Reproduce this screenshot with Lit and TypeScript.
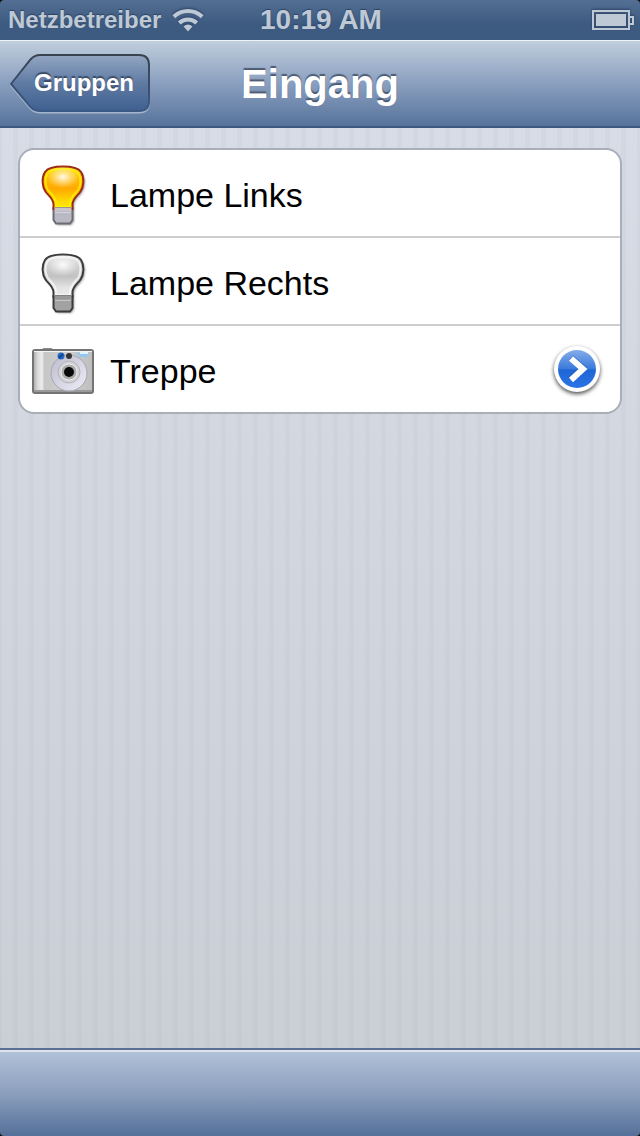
import { LitElement, html, css, svg } from "lit";
import { customElement, property } from "lit/decorators.js";

type IconName = "lamp-on" | "lamp-off" | "camera";

interface Device {
  name: string;
  icon: IconName;
  detail?: boolean;
}

const devices: Device[] = [
  { name: "Lampe Links", icon: "lamp-on" },
  { name: "Lampe Rechts", icon: "lamp-off" },
  { name: "Treppe", icon: "camera", detail: true },
];

@customElement("device-icon")
export class DeviceIcon extends LitElement {
  @property() name: IconName = "lamp-on";

  static styles = css`
    :host {
      display: block;
      width: 64px;
      height: 64px;
    }
    .icon {
      display: block;
      width: 100%;
      height: 100%;
    }
  `;

  private bulb(on: boolean) {
    const edge = on ? "#9c2b14" : "#3c3c3c";
    const glass =
      "M31 3.5C23 3.500 16 4.500 13 9C9.500 14.500 10 23.500 13.500 28.500C16.500 33 21 35 21.500 41L21.500 46H40.500L40.500 41C41 35 45.500 33 48.500 28.500C52 23.500 52.500 14.500 49 9C46 4.500 39 3.500 31 3.500Z";
    const base = "M21.500 45H40.500V57L38 60.500H24L21.500 57Z";
    return svg`
      <defs>
        <linearGradient id="glass" x1="0" y1="0" x2="0" y2="1">
          <stop offset="0" stop-color=${on ? "#ffdc18" : "#e6e6e6"} />
          <stop offset=".3" stop-color=${on ? "#ffbe10" : "#d0d0d0"} />
          <stop offset=".52" stop-color=${on ? "#ffa800" : "#c2c2c2"} />
          <stop offset=".78" stop-color=${on ? "#ffd400" : "#e4e4e4"} />
          <stop offset="1" stop-color=${on ? "#ffef00" : "#ededed"} />
        </linearGradient>
        <radialGradient id="shine">
          <stop offset="0" stop-color="#fff" stop-opacity=".9" />
          <stop offset=".5" stop-color="#fff" stop-opacity=".4" />
          <stop offset="1" stop-color="#fff" stop-opacity="0" />
        </radialGradient>
        <filter id="soft" x="-20%" y="-20%" width="140%" height="140%">
          <feGaussianBlur stdDeviation="1" />
        </filter>
      </defs>
      <g transform="translate(1.500 1.500)" opacity=".4" filter="url(#soft)">
        <path d=${glass} /><path d=${base} />
      </g>
      <path d=${base} fill=${on ? "#b9b9c6" : "#a2a2a2"} stroke=${on ? "#6c6c72" : "#3c3c3c"} stroke-width="2" />
      <path d=${glass} fill="url(#glass)" stroke=${edge} stroke-width="2" />
      <path d="M31 6C24 6 18 6.500 15.500 10.500C12.500 15.500 13 22.500 16 27C19 31 23.500 34 24 40V44H38V40C38.500 34 43 31 46 27C49 22.500 49.500 15.500 46.500 10.500C44 6.500 38 6 31 6Z"
        fill="none" stroke=${on ? "#fff000" : "#f8f8f8"} stroke-width="2" opacity=".8" />
      <ellipse cx="31" cy="14" rx="15" ry="11" fill="url(#shine)" />
      <path d="M22.500 44H39.500V48H22.500Z" fill=${on ? "#c8c4c8" : "#999"} />
      <path d="M22.500 44.500H39.500" stroke=${on ? "#9b958e" : "#818181"} stroke-width="1" />
      <path d="M23 49.500H39" stroke="#fff" stroke-width="1" opacity=".4" />
    `;
  }

  private camera() {
    return svg`
      <defs>
        <linearGradient id="body" x1="0" y1="0" x2="1" y2="0">
          <stop offset="0" stop-color="#a9a9a9" />
          <stop offset=".08" stop-color="#dadada" />
          <stop offset=".15" stop-color="#eeeeee" />
          <stop offset=".19" stop-color="#c6c6c6" />
          <stop offset=".55" stop-color="#cfcfcf" />
          <stop offset="1" stop-color="#bebebe" />
        </linearGradient>
        <linearGradient id="ring" x1="0" y1="0" x2="1" y2="1">
          <stop offset="0" stop-color="#bbbbcc" />
          <stop offset="1" stop-color="#eeeefa" />
        </linearGradient>
      </defs>
      <rect x="10" y="9" width="11" height="4" rx="2" fill="#8b8b8b" />
      <rect x="1" y="11" width="60" height="43" rx="2" fill="url(#body)" stroke="#747474" stroke-width="2" />
      <path d="M2 52H60" stroke="#999" stroke-width="2" />
      <path d="M2 12.500H60" stroke="#f3f3f3" />
      <circle cx="37" cy="34" r="18" fill="url(#ring)" stroke="#a7a7b4" />
      <path d="M44 14H57L55 18H48Z" fill="#94c6ef" />
      <path d="M48 14L56 14" stroke="#dff3ff" stroke-width="2" />
      <circle cx="29" cy="17" r="3.500" fill="#2467c8" />
      <path d="M27 19L31 15" stroke="#164487" stroke-width="2" />
      <circle cx="37" cy="17" r="3" fill="#333" />
      <circle cx="37" cy="33" r="11" fill="#d2d2d6" stroke="#b4b4bb" />
      <circle cx="37" cy="33" r="8" fill="#aaa" stroke="#eee" />
      <circle cx="37" cy="33" r="5" fill="#080808" />
    `;
  }

  render() {
    return html`<svg class="icon" viewBox="0 0 64 64" aria-hidden="true">
      ${this.name === "camera" ? this.camera() : this.bulb(this.name === "lamp-on")}
    </svg>`;
  }
}

@customElement("status-bar")
export class StatusBar extends LitElement {
  static styles = css`
    :host {
      display: block;
      background: #000;
    }
    .bar {
      display: grid;
      grid-template-columns: 1fr auto 1fr;
      align-items: center;
      height: 40px;
      padding: 0 6px 0 8px;
      box-sizing: border-box;
      border-radius: 4px 4px 0 0;
      background: linear-gradient(#546f93, #3d5a80 60%, #3d5a80);
      color: #bfc9d6;
      font-weight: bold;
      text-shadow: 0 -1px 1px #2b4263;
    }
    .carrier {
      display: flex;
      align-items: center;
      gap: 11px;
      font-size: 24px;
    }
    .time {
      font-size: 28px;
    }
    .battery {
      justify-self: end;
    }
    .glyph {
      display: block;
      filter: drop-shadow(0 -1px 1px #2b4263);
    }
  `;

  render() {
    return html`<div class="bar">
      <span class="carrier">
        Netzbetreiber
        <svg class="glyph" width="32" height="24" viewBox="0 0 32 24" role="img" aria-label="WLAN">
          <g fill="none" stroke="#bfc9d6" stroke-width="4">
            <path d="M1.800 8.800A20.500 20.500 0 0 1 30.200 8.800" />
            <path d="M7.300 15A12.500 12.500 0 0 1 24.700 15" />
          </g>
          <path d="M11.500 18.500Q16 14.500 20.500 18.500L16 23.500Z" fill="#bfc9d6" />
        </svg>
      </span>
      <span class="time">10:19 AM</span>
      <svg class="glyph battery" width="42" height="20" viewBox="0 0 42 20" role="img" aria-label="Batterie">
        <rect x="1" y="1" width="36" height="18" fill="none" stroke="#bfc9d6" stroke-width="2" />
        <rect x="4" y="4" width="30" height="12" fill="#bfc9d6" />
        <path d="M38 7H41V14H38" fill="none" stroke="#bfc9d6" stroke-width="2" />
      </svg>
    </div>`;
  }
}

@customElement("nav-bar")
export class NavBar extends LitElement {
  static styles = css`
    :host {
      display: block;
    }
    .bar {
      display: grid;
      grid-template-columns: 1fr auto 1fr;
      align-items: center;
      height: 88px;
      padding: 0 10px;
      box-sizing: border-box;
      border-top: 1px solid #edf2f8;
      border-bottom: 2px solid #3b5980;
      background: linear-gradient(#c0cedd, #8a9fbf 50%, #57739b);
    }
    .back {
      position: relative;
      justify-self: start;
      width: 140px;
      height: 60px;
      padding: 0 18px 2px 24px;
      border: 0;
      background: none;
      color: #fff;
      font: bold 24px "Liberation Sans", Arial, sans-serif;
      text-shadow: 0 -2px 1px #3a4b68;
      text-align: left;
    }
    .shape {
      position: absolute;
      inset: 0;
      width: 100%;
      height: 100%;
    }
    .label {
      position: relative;
    }
    .title {
      margin: 0;
      color: #fff;
      font-size: 40px;
      line-height: 48px;
      text-shadow: 0 -2px 1px #4c5a72;
    }
  `;

  render() {
    const outline =
      "M1 30L20.500 5.500Q24.500 1 30 1H129Q139 1 139 11V47Q139 57 129 57H30Q24.500 57 20.500 53Z";
    return html`<header class="bar">
      <button class="back" type="button">
        <svg class="shape" viewBox="0 0 140 60" aria-hidden="true">
          <defs>
            <linearGradient id="fill" x1="0" y1="0" x2="0" y2="1">
              <stop offset="0" stop-color="#93a6c2" />
              <stop offset=".5" stop-color="#5f7ba3" />
              <stop offset="1" stop-color="#3f6090" />
            </linearGradient>
            <linearGradient id="line" x1="0" y1="0" x2="0" y2="1">
              <stop offset="0" stop-color="#39424f" />
              <stop offset="1" stop-color="#3c5a86" />
            </linearGradient>
          </defs>
          <path d=${outline} transform="translate(0 1.500)" fill="none" stroke="#b4c2d6" stroke-width="2" opacity=".8" />
          <path d=${outline} fill="url(#fill)" stroke="url(#line)" stroke-width="2" />
        </svg>
        <span class="label">Gruppen</span>
      </button>
      <h1 class="title">Eingang</h1>
    </header>`;
  }
}

@customElement("app-root")
export class AppRoot extends LitElement {
  static styles = css`
    :host {
      display: flex;
      flex-direction: column;
      min-height: 100vh;
      font-family: "Liberation Sans", Arial, sans-serif;
      background:
        repeating-linear-gradient(
          90deg,
          rgba(80, 100, 150, 0.04) 0 2px,
          transparent 2px 13px,
          rgba(80, 100, 150, 0.04) 13px 16px
        ),
        linear-gradient(#d9dee8, #cacdd4);
    }
    .content {
      flex: 1;
      padding: 20px 18px;
    }
    .list {
      margin: 0;
      padding: 0;
      list-style: none;
      overflow: hidden;
      background: #fff;
      border: 2px solid #a9aeb8;
      border-radius: 16px;
    }
    .row {
      display: flex;
      align-items: center;
      gap: 14px;
      height: 88px;
      padding: 4px 19px 0 12px;
      box-sizing: border-box;
      border-bottom: 2px solid #cdcdcd;
    }
    .row:last-child {
      height: 86px;
      border-bottom: 0;
    }
    .name {
      flex: 1;
      color: #000;
      font-size: 34px;
      line-height: 40px;
    }
    .detail {
      width: 48px;
      height: 54px;
      padding: 0;
      border: 0;
      background: none;
    }
    .disc {
      display: block;
      overflow: visible;
    }
    .toolbar {
      background: #000;
    }
    .surface {
      height: 88px;
      box-sizing: border-box;
      border-top: 2px solid #5a7092;
      border-radius: 0 0 4px 4px;
      background: linear-gradient(#dce3ec 0 2px, #b1c1d7 2px, #8c9fbe 50%, #557099);
    }
  `;

  private disclosure(name: string) {
    return html`<button class="detail" type="button" aria-label=${`${name} anzeigen`}>
      <svg class="disc" width="48" height="54" viewBox="0 0 48 54" aria-hidden="true">
        <defs>
          <linearGradient id="blue" x1="0" y1="0" x2="0" y2="1">
            <stop offset="0" stop-color="#84ace9" />
            <stop offset=".5" stop-color="#397adb" />
            <stop offset=".52" stop-color="#1f66d5" />
            <stop offset="1" stop-color="#2a74e6" />
          </linearGradient>
          <filter id="blur" x="-30%" y="-30%" width="160%" height="160%">
            <feGaussianBlur stdDeviation="2" />
          </filter>
        </defs>
        <circle cx="24" cy="27" r="23" opacity=".7" filter="url(#blur)" />
        <circle cx="24" cy="25" r="23" fill="#fff" />
        <circle cx="24" cy="25" r="19" fill="url(#blue)" />
        <path d="M18 14.500L30 25L18 36" fill="none" stroke="#164da8" stroke-width="6" opacity=".5" transform="translate(0 -1)" />
        <path d="M18 14.500L30 25L18 36" fill="none" stroke="#fff" stroke-width="6" />
      </svg>
    </button>`;
  }

  render() {
    return html`
      <status-bar></status-bar>
      <nav-bar></nav-bar>
      <main class="content">
        <ul class="list">
          ${devices.map(
            (d) => html`<li class="row">
              <device-icon .name=${d.icon}></device-icon>
              <span class="name">${d.name}</span>
              ${d.detail ? this.disclosure(d.name) : null}
            </li>`
          )}
        </ul>
      </main>
      <footer class="toolbar"><div class="surface"></div></footer>
    `;
  }
}
